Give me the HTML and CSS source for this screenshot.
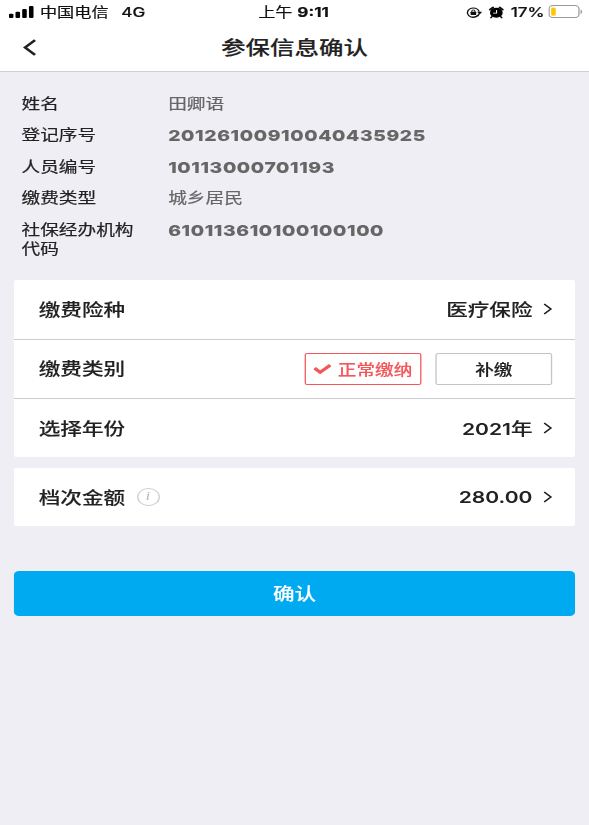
FILE: index.html
```
<!DOCTYPE html>
<html lang="zh-CN">
<head>
    <meta charset="UTF-8">
    <meta name="viewport" content="width=device-width, initial-scale=1.0">
    <title>参保信息确认</title>
    <link rel="stylesheet" href="styles.css">
</head>
<body>
    <div class="screen">
        <div class="status-bar">
            <div class="status-left">
                <svg class="signal" width="20" height="12" viewBox="0 0 20 12">
                    <rect x="0" y="7.8" width="3.6" height="4.2" rx="1"/>
                    <rect x="5.2" y="5.8" width="3.6" height="6.2" rx="1"/>
                    <rect x="10.5" y="3" width="3.6" height="9" rx="1"/>
                    <rect x="15.8" y="0" width="3.6" height="12" rx="1"/>
                </svg>
                <span class="carrier">中国电信</span>
                <span class="network">4G</span>
            </div>
            <div class="status-time">上午 <b>9:11</b></div>
            <div class="status-right">
                <svg class="lock" width="13" height="11" viewBox="0 0 13 11" fill="none" stroke="#111">
                    <path d="M10.6 6.2A4.7 4.7 0 1 1 10.5 4.6M9.7 7.9A4.7 4.7 0 0 1 2 8.3" stroke-width="1.1"/>
                    <path d="M8.9 4.7h4L10.9 7.4z" fill="#111" stroke="none"/>
                    <rect x="3.7" y="4.8" width="4.4" height="3.1" rx=".5" fill="#111" stroke="none"/>
                    <path d="M4.7 5V4a1.2 1.2 0 0 1 2.4 0v1" stroke-width=".8"/>
                </svg>
                <svg class="alarm" width="12" height="13" viewBox="0 0 12 13">
                    <circle cx="6" cy="6.8" r="5"/>
                    <path d="M1 3.6 3.4 1.5M11 3.6 8.6 1.5" stroke="#111" stroke-width="1.7" stroke-linecap="round"/>
                    <path d="M2.6 10.6 1.8 11.7M9.4 10.6l.8 1.1" stroke="#111" stroke-width="1.4" stroke-linecap="round"/>
                    <path d="M6.2 4v3.2H3.4" fill="none" stroke="#fff" stroke-width=".8"/>
                </svg>
                <span class="percent">17%</span>
                <svg class="battery" width="28" height="14" viewBox="0 0 28 14">
                    <rect x=".5" y=".6" width="23.6" height="12" rx="3" fill="#fff" stroke="#999"/>
                    <rect x="2.2" y="2.4" width="3.6" height="8.4" rx="1.5" fill="#fdc800"/>
                    <path d="M25.6 4.8q1.8 2 0 4z" fill="#999" stroke="#999" stroke-width=".4"/>
                </svg>
            </div>
        </div>
        <div class="nav">
            <svg class="back" width="11" height="17" viewBox="0 0 11 17">
                <path d="M9.6 1.2 1.8 8.5l7.8 7.3" fill="none" stroke="#222" stroke-width="2.3"/>
            </svg>
            <h1>参保信息确认</h1>
        </div>

        <dl class="info">
            <dt>姓名</dt><dd>田卿语</dd>
            <dt>登记序号</dt><dd class="number">20126100910040435925</dd>
            <dt>人员编号</dt><dd class="number">10113000701193</dd>
            <dt>缴费类型</dt><dd>城乡居民</dd>
            <dt>社保经办机构代码</dt><dd class="number">610113610100100100</dd>
        </dl>

        <div class="card">
            <div class="row">
                <span class="label">缴费险种</span>
                <span class="value">医疗保险</span>
                <svg class="arrow" width="7" height="12" viewBox="0 0 7 12"><path d="M.7.9 6 6 .7 11.1"/></svg>
            </div>
            <div class="row">
                <span class="label">缴费类别</span>
                <div class="option selected">
                    <svg width="14" height="12" viewBox="0 0 14 12"><path d="M.8 5.2 5.2 9.3 13.2 2.2"/></svg>
                    <span>正常缴纳</span>
                </div>
                <div class="option"><span>补缴</span></div>
            </div>
            <div class="row">
                <span class="label">选择年份</span>
                <span class="value"><b>2021</b>年</span>
                <svg class="arrow" width="7" height="12" viewBox="0 0 7 12"><path d="M.7.9 6 6 .7 11.1"/></svg>
            </div>
        </div>

        <div class="card amount">
            <div class="row">
                <span class="label">档次金额</span>
                <i class="tip">i</i>
                <span class="value"><b>280.00</b></span>
                <svg class="arrow" width="7" height="12" viewBox="0 0 7 12"><path d="M.7.9 6 6 .7 11.1"/></svg>
            </div>
        </div>

        <button class="confirm">确认</button>
    </div>
</body>
</html>
```
FILE: styles.css
```
* { box-sizing: border-box; }
body {
    margin: 0;
    overflow: hidden;
    background-color: #efeef4;
    font-family: Inter, "Noto Sans CJK SC", sans-serif;
    color: #222;
}
/* 464px layout stretched to the full 589px width */
.screen {
    width: 464px;
    height: 825px;
    transform: scaleX(1.2694);
    transform-origin: 0 0;
}
.status-bar {
    display: grid;
    grid-template-columns: 1fr auto 1fr;
    align-items: center;
    height: 24px;
    padding: 0 4.5px 0 7px;
    background-color: #fff;
    color: #111;
    font-size: 13.5px;
    line-height: 24px;
    white-space: nowrap;
    -webkit-text-stroke: .2px;
}
.status-left, .status-right { display: flex; align-items: center; }
.status-left span, .status-time { margin-top: -1px; }
.status-right { justify-content: flex-end; }
.status-left .carrier { margin-left: 4.5px; }
.network { margin-left: 10px; font-weight: 500; }
.status-time { padding-right: 4px; }
.status-time b { font-weight: 700; }
.lock { margin-right: 5px; }
.alarm { margin-right: 5px; }
.percent { margin-right: 2.5px; font-weight: 500; }
.battery { margin-top: -1px; }
.nav {
    position: relative;
    display: flex;
    align-items: center;
    justify-content: center;
    height: 48px;
    border-bottom: 1px solid #cfcfd1;
    background-color: #fff;
}
.nav h1 {
    margin: -2px 0 0;
    font-size: 19.3px;
    font-weight: 500;
    -webkit-text-stroke: .15px;
}
.back { position: absolute; left: 18px; top: 15px; }
.info {
    display: grid;
    grid-template-columns: 90px 1fr;
    column-gap: 25.5px;
    row-gap: 12.4px;
    margin: 0;
    padding: 23px 17px 0;
    font-size: 14.7px;
    line-height: 19px;
    -webkit-text-stroke: .2px;
}
.info dd { margin: 0; color: #666; }
.info .number {
    font-size: 15.2px;
    font-weight: 800;
    letter-spacing: .5px;
    -webkit-text-stroke: .1px;
}
.card {
    margin: 21.6px 11px 0;
    border-radius: 2px;
    background-color: #fff;
}
.row {
    display: flex;
    align-items: center;
    height: 59.5px;
    padding: 0 18px 0 19.5px;
    border-bottom: 1px solid #ccc;
    font-size: 17px;
    font-weight: 500;
    -webkit-text-stroke: .12px;
}
.row:last-child { height: 58px; border-bottom: 0; }
.label, .value { position: relative; top: -1px; }
.value { margin-left: auto; }
.value b {
    font-size: 16.6px;
    font-weight: 600;
    -webkit-text-stroke: 0;
}
.arrow { margin-left: 8.5px; fill: none; stroke: #222; stroke-width: 1.4; }
.option {
    display: flex;
    align-items: center;
    justify-content: center;
    gap: 5px;
    width: 92px;
    height: 32px;
    margin-left: 11px;
    border: 1px solid #c4c4c4;
    border-radius: 2px;
    font-size: 14.7px;
}
.option span { margin-top: -1px; }
.option.selected { margin-left: auto; border-color: #f4565a; color: #f4565a; }
.option svg { fill: none; stroke: #f4565a; stroke-width: 3; }
.amount { margin-top: 11px; }
.amount .value { top: 0; }
.tip {
    width: 18px;
    height: 18px;
    margin-left: 9px;
    border: 1px solid #ccc;
    border-radius: 50%;
    color: #bbb;
    font: italic 12px/15px "Liberation Serif", serif;
    text-align: center;
}
.confirm {
    display: block;
    width: 442px;
    height: 45px;
    margin: 45px 11px 0;
    padding: 0 0 2px;
    border: 0;
    border-radius: 4px;
    background-color: #00aaf0;
    color: #fff;
    font: 500 17px Inter, "Noto Sans CJK SC", sans-serif;
    -webkit-text-stroke: .1px;
}
```
